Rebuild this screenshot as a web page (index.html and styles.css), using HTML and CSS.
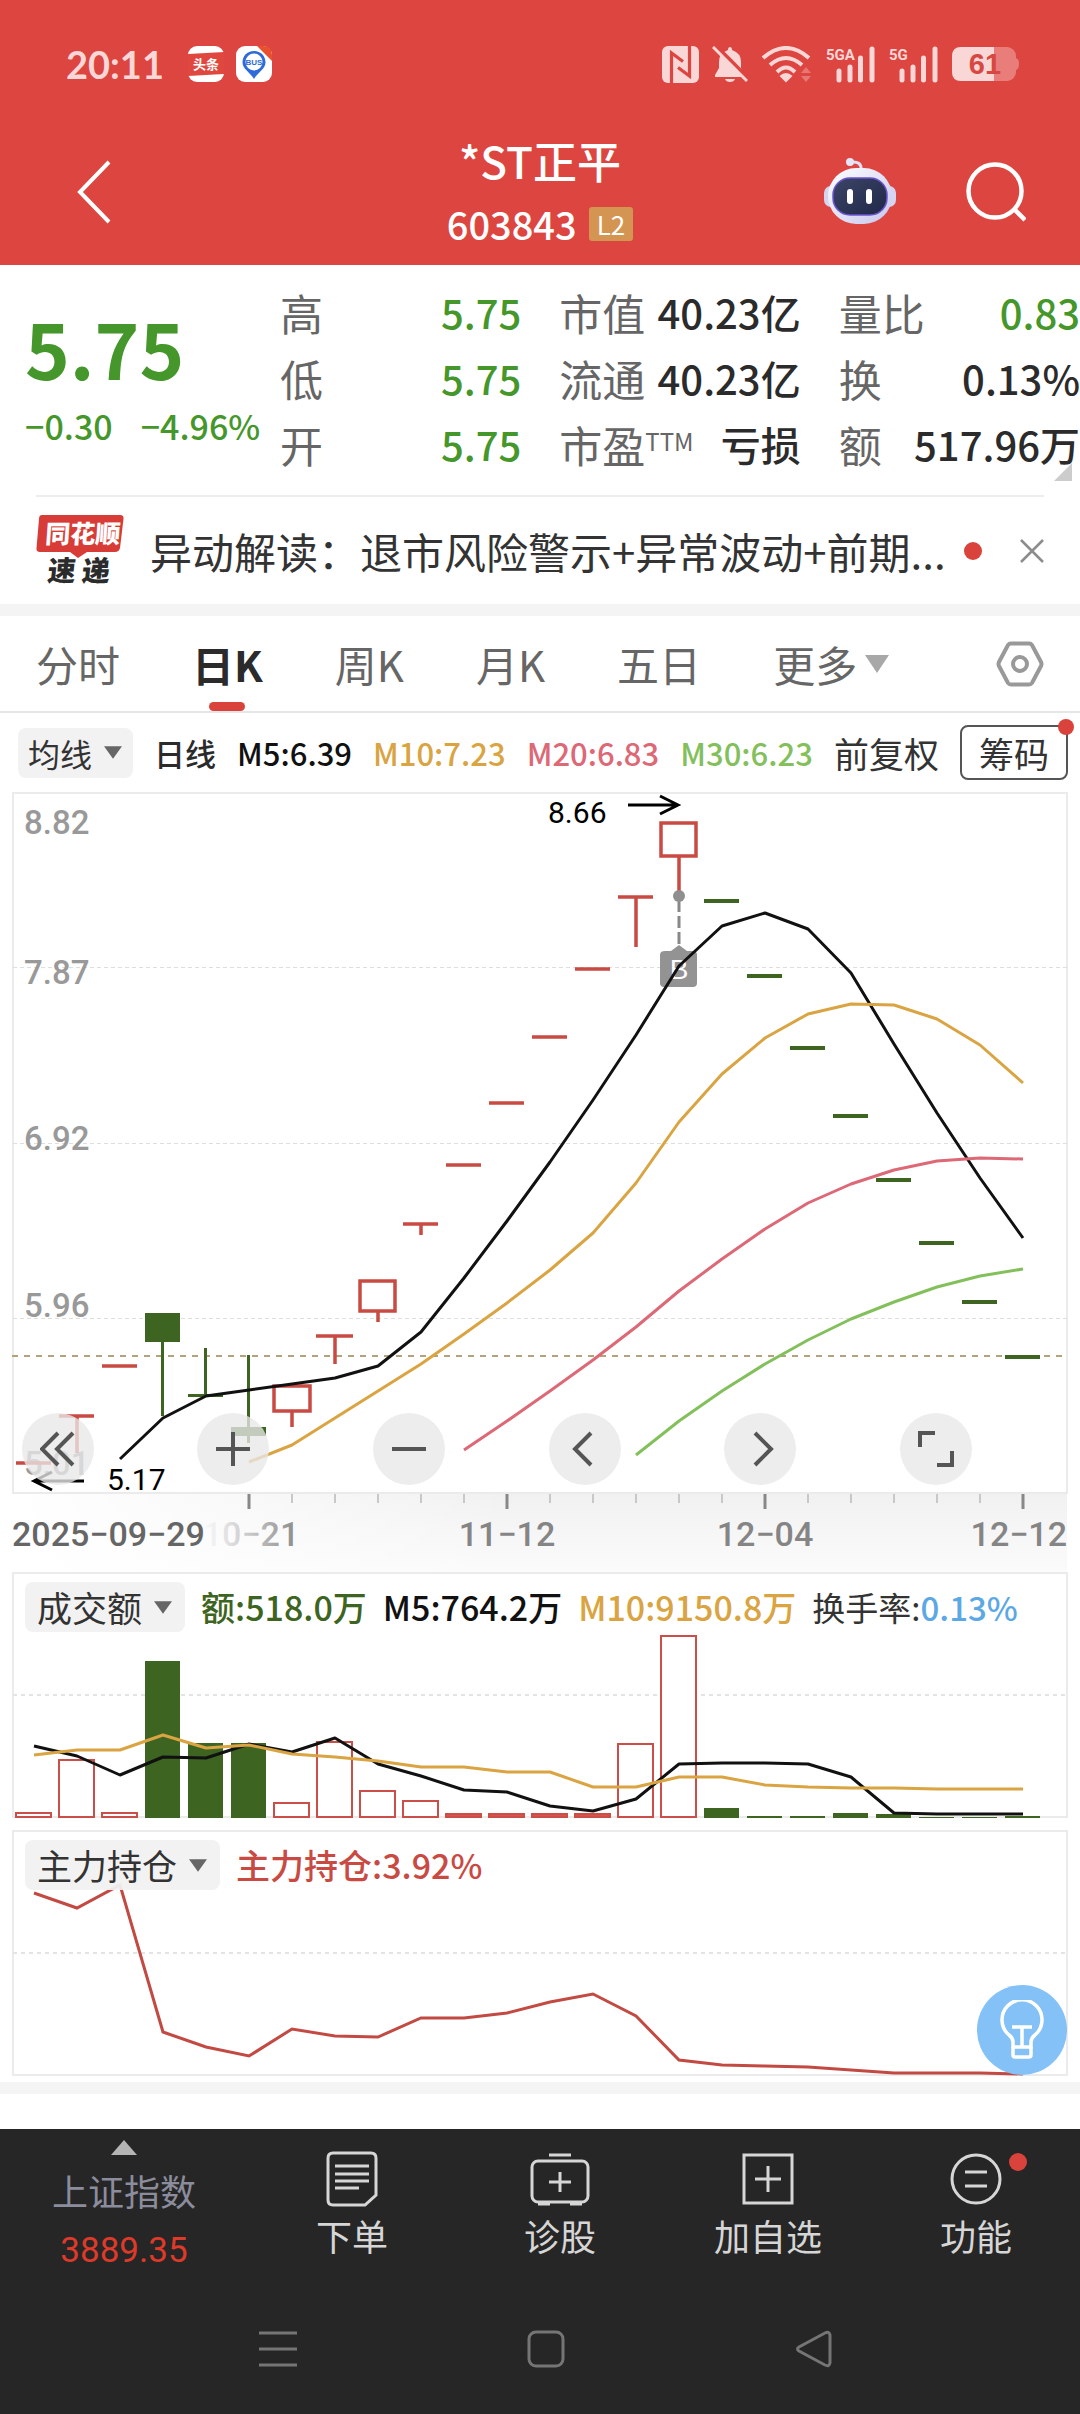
FILE: index.html
```html
<!DOCTYPE html>
<html lang="zh-CN">
<head>
<meta charset="utf-8">
<meta name="viewport" content="width=device-width, initial-scale=1">
<title>*ST正平 603843</title>
<link rel="stylesheet" href="styles.css">
</head>
<body>
<header class="top">
  <div class="status">
    <span class="clock">20:11</span>
    <svg class="app-icon" viewBox="0 0 36 36" width="36" height="36" aria-hidden="true">
      <rect width="36" height="36" rx="9" fill="#fff"/>
      <path d="M0 8 36 6V28L0 30Z" fill="#e0483f"/>
      <text x="18" y="23" text-anchor="middle" class="app-text">头条</text>
    </svg>
    <svg class="app-icon" viewBox="0 0 36 36" width="36" height="36" aria-hidden="true">
      <rect width="36" height="36" rx="9" fill="#fff"/>
      <path d="M21 0H27Q36 0 36 9V15Z" fill="#e8502e"/>
      <path d="M18 5C11 5 6.500 10 6.500 16.500C6.500 23 14 26 18 33C22 26 29.500 23 29.500 16.500C29.500 10 25 5 18 5Z" fill="#2f6bd8"/>
      <circle cx="18" cy="16" r="8.500" fill="#fff"/>
      <text x="18" y="19" text-anchor="middle" class="bus-text">BUS</text>
    </svg>
    <span class="status-right">
      <svg viewBox="0 0 37 37" width="37" height="37" aria-label="NFC"><rect width="37" height="37" rx="6" fill="#f8d7d6"/><path d="M9.500 37V7L21 15.500M27.500 0V30L16 21.500" fill="none" stroke="#dd4540" stroke-width="3.200"/></svg>
      <svg viewBox="0 0 36 37" width="36" height="37" aria-label="静音"><path d="M16 4Q16 1 18 1T20 4Q29 7 29 16V22L32 29V31H3V29L7 22V16Q7 7 16 4Z" fill="#f8d7d6"/><path d="M13 33H23Q22 36 18 36T13 33Z" fill="#f8d7d6"/><path d="M3-1 37 33" stroke="#dd4540" stroke-width="4"/><path d="M1 1 35 35" stroke="#f8d7d6" stroke-width="3"/></svg>
      <svg viewBox="0 0 52 37" width="52" height="37" aria-label="Wi-Fi"><g fill="none" stroke="#f8d7d6" stroke-width="4"><path d="M2 12Q25-8 48 12"/><path d="M9 19Q25 5 41 19"/><path d="M16 26Q25 17 34 26"/></g><path d="M18.500 30Q25 24 31.500 30L25 36.500Z" fill="#f8d7d6"/><path d="M40 27 45 21 50 27ZM40 30 45 36 50 30Z" fill="#e67773"/></svg>
      <svg viewBox="0 0 50 37" width="50" height="37" aria-label="5GA 信号"><text x="0" y="14" class="net-text">5GA</text><path d="M13 25V34M24 21V34M34.500 12V34M46 3V34" stroke="#f8d7d6" stroke-width="5" stroke-linecap="round"/></svg>
      <svg viewBox="0 0 50 37" width="50" height="37" aria-label="5G 信号"><text x="0" y="14" class="net-text">5G</text><path d="M13 25V34M24 21V34M34.500 12V34M46 3V34" stroke="#f8d7d6" stroke-width="5" stroke-linecap="round"/></svg>
      <svg viewBox="0 0 68 34" width="68" height="34" aria-label="电量 61%"><rect width="64" height="34" rx="9" fill="#e97d7a"/><path d="M63 11Q67 11 67 17T63 23Z" fill="#e97d7a"/><path d="M9 0H42V34H9Q0 34 0 25V9Q0 0 9 0Z" fill="#f8d7d6"/><text x="33" y="27" text-anchor="middle" class="bat-text">61</text></svg>
    </span>
  </div>
  <div class="title-bar">
    <button class="icon-btn back" aria-label="返回"><svg viewBox="0 0 36 66" width="36" height="66"><path d="M33 3 4 33 33 63" fill="none" stroke="#fff" stroke-width="4"/></svg></button>
    <div class="title">
      <h1>*ST正平</h1>
      <p><span>603843</span><span class="level">L2</span></p>
    </div>
    <div class="title-actions">
      <button class="icon-btn" aria-label="智能助手"><svg viewBox="0 0 72 68" width="72" height="68">
        <defs><linearGradient id="shell" x1="0" y1="0" x2="1" y2="1"><stop offset="0" stop-color="#fff"/><stop offset="1" stop-color="#c6c6ee"/></linearGradient><linearGradient id="face" x1="0" y1="0" x2="1" y2="1"><stop offset="0" stop-color="#3d4567"/><stop offset="1" stop-color="#20284a"/></linearGradient></defs>
        <path d="M27 4Q38 3 37 12" fill="none" stroke="#dfe0f5" stroke-width="3"/><circle cx="26" cy="4" r="4" fill="#e4e5f8"/>
        <rect x="0" y="28" width="72" height="21" rx="7" fill="#d5d5f0"/>
        <rect x="4" y="10" width="64" height="56" rx="28" fill="url(#shell)"/>
        <rect x="9" y="20" width="54" height="37" rx="17" fill="url(#face)" stroke="#6a55cf" stroke-width="1.500"/>
        <rect x="23" y="31" width="6" height="15" rx="3" fill="#fff"/><rect x="42" y="31" width="6" height="15" rx="3" fill="#fff"/>
      </svg></button>
      <button class="icon-btn" aria-label="搜索"><svg viewBox="0 0 60 60" width="60" height="60"><circle cx="29" cy="29" r="26.500" fill="none" stroke="#fff" stroke-width="4.500"/><path d="M48 47 59 58" stroke="#fff" stroke-width="4.500"/></svg></button>
    </div>
  </div>
</header>

<main>
  <section class="quote">
    <div class="price">
      <strong>5.75</strong>
      <p><span>−0.30</span><span>−4.96%</span></p>
    </div>
    <div class="stats">
      <dl>
        <div><dt>高</dt><dd class="down">5.75</dd></div>
        <div><dt>低</dt><dd class="down">5.75</dd></div>
        <div><dt>开</dt><dd class="down">5.75</dd></div>
      </dl>
      <dl>
        <div><dt>市值</dt><dd>40.23亿</dd></div>
        <div><dt>流通</dt><dd>40.23亿</dd></div>
        <div><dt>市盈<sup>TTM</sup></dt><dd>亏损</dd></div>
      </dl>
      <dl>
        <div><dt>量比</dt><dd class="down">0.83</dd></div>
        <div><dt>换</dt><dd>0.13%</dd></div>
        <div><dt>额</dt><dd>517.96万</dd></div>
      </dl>
    </div>
    <span class="corner"></span>
  </section>

  <section class="news">
    <svg class="news-logo" viewBox="0 0 90 80" width="90" height="80" aria-label="同花顺速递">
      <path d="M6 4H84Q88 4 87.500 8L84 37Q83 41 79 41H51L42 47 34 41H4Q0 41 0.500 37L3 8Q3 4 6 4Z" fill="#d83c37"/>
      <text x="11" y="32" class="logo-a" transform="skewX(-4)">同花顺</text>
      <text x="18" y="70" class="logo-b" transform="skewX(-6)">速 递</text>
    </svg>
    <a href="#news">异动解读：退市风险警示+异常波动+前期...</a>
    <i class="dot"></i>
    <button class="icon-btn" aria-label="关闭"><svg viewBox="0 0 24 24" width="24" height="24"><path d="M1 1 23 23M23 1 1 23" stroke="#8c8c8c" stroke-width="2.500"/></svg></button>
  </section>

  <nav class="tabs">
    <button>分时</button>
    <button class="active">日K</button>
    <button>周K</button>
    <button>月K</button>
    <button>五日</button>
    <button class="more">更多<svg viewBox="0 0 24 18" width="24" height="18"><path d="M0 0H24L12 18Z" fill="#a8a8a8"/></svg></button>
    <button class="gear" aria-label="设置"><svg viewBox="0 0 48 46" width="48" height="46"><path d="M15 2.500H33Q35 2.500 36 4L45 21Q46 23 45 25L36 42Q35 43.500 33 43.500H15Q13 43.500 12 42L3 25Q2 23 3 21L12 4Q13 2.500 15 2.500Z" fill="none" stroke="#999" stroke-width="4"/><circle cx="24" cy="23" r="7" fill="none" stroke="#999" stroke-width="4"/></svg></button>
  </nav>

  <section class="ma-row">
    <button class="picker">均线<svg viewBox="0 0 20 14" width="18" height="13"><path d="M0 0H20L10 14Z" fill="#666"/></svg></button>
    <span class="ma-day">日线</span>
    <span class="c-black">M5:6.39</span>
    <span class="c-gold">M10:7.23</span>
    <span class="c-pink">M20:6.83</span>
    <span class="c-lime">M30:6.23</span>
    <span class="adjust">前复权</span>
    <button class="chips">筹码<i class="dot"></i></button>
  </section>

  <section class="kline">
    <svg class="chart" viewBox="0 790 1080 782" role="img" aria-label="日K线图">
      <defs>
        <linearGradient id="axisV" x1="0" y1="0" x2="0" y2="1"><stop offset="0" stop-color="#f1f1f1"/><stop offset="1" stop-color="#fbfbfb"/></linearGradient>
        <linearGradient id="axisH"><stop offset="0" stop-color="#fff"/><stop offset="1" stop-color="#fff" stop-opacity="0"/></linearGradient>
        <linearGradient id="dateFade"><stop offset="0" stop-color="#999" stop-opacity="0"/><stop offset="1" stop-color="#888"/></linearGradient>
      </defs>
      <rect x="13" y="1494" width="1054" height="78" fill="url(#axisV)"/>
      <rect x="13" y="1494" width="500" height="78" fill="url(#axisH)"/>
      <rect x="13" y="793" width="1054" height="700" fill="#fff" stroke="#ebebeb" stroke-width="2"/>
      <path d="M13 967.500H1067M13 1143.500H1067M13 1318.500H1067" stroke="#dedede" stroke-dasharray="4 3"/>
      <g class="axis-y">
        <text x="24" y="834">8.82</text><text x="24" y="984">7.87</text><text x="24" y="1150">6.92</text><text x="24" y="1317">5.96</text><text x="24" y="1475">5.01</text>
      </g>
      <path d="M12 1356H1067" stroke="#b3a37b" stroke-width="2" stroke-dasharray="6 6"/>
      <g stroke="#c94a43" stroke-width="3.500" fill="none">
        <path d="M16 1463H51M59 1416H94M77 1416V1453M102 1366H137"/>
        <path d="M274 1386H310V1411H274ZM292 1411V1427M316 1336H353M335 1336V1364M360 1281H395V1311H360ZM378 1311V1322"/>
        <path d="M403 1224H438M421 1224V1235M446 1165H481M489 1103H524M532 1037H567M575 969H610M618 897H653M636 897V947M661 823H696V856H661ZM679 856V896"/>
      </g>
      <g fill="#3e6422">
        <path d="M145 1313H180V1342H145ZM161 1342H164V1416H161ZM188 1394H223V1397H188ZM204 1348H207V1395H204ZM231 1427H266V1436H231ZM247 1355H250V1443H247Z"/>
        <path d="M704 899H739V903H704ZM747 974H782V978H747ZM790 1046H825V1050H790ZM833 1114H868V1118H833ZM876 1178H911V1182H876ZM919 1241H954V1245H919ZM962 1300H997V1304H962ZM1005 1355H1040V1359H1005Z"/>
      </g>
      <path d="M679 900V948" stroke="#888" stroke-width="3" stroke-dasharray="12 4"/>
      <circle cx="679" cy="896" r="6" fill="#8f8f8f"/>
      <path d="M665 951H671L679 945 687 951H693Q697 951 697 955V983Q697 987 693 987H664Q660 987 660 983V955Q660 951 665 951Z" fill="#939393"/>
      <text x="679" y="979" text-anchor="middle" class="badge-b">B</text>
      <g class="line">
        <polyline stroke="#111" points="120,1459 163,1418 206,1396 249,1390 292,1384 335,1378 378,1366 421,1332 464,1278 507,1221 550,1162 593,1100 636,1035 679,966 722,926 765,913 808,929 851,973 894,1044 937,1113 980,1178 1023,1238"/>
        <polyline stroke="#d9a441" points="249,1462 292,1445 335,1418 378,1391 421,1364 464,1334 507,1303 550,1270 593,1233 636,1183 679,1122 722,1074 765,1038 808,1014 851,1004 894,1005 937,1019 980,1045 1023,1083"/>
        <polyline stroke="#dd6876" points="464,1450 507,1421 550,1391 593,1360 636,1327 679,1291 722,1259 765,1229 808,1203 851,1184 894,1170 937,1161 980,1158 1023,1159"/>
        <polyline stroke="#83c05c" points="636,1455 679,1421 722,1391 765,1364 808,1340 851,1319 894,1302 937,1287 980,1276 1023,1269"/>
      </g>
      <g fill="none" stroke="#000" stroke-width="3"><path d="M628 805H678M660 796 678 805 660 814M84 1481H35M52 1472 34 1481 52 1490"/></g>
      <g class="mark"><text x="548" y="823">8.66</text><text x="107" y="1490">5.17</text></g>
      <path d="M292 1494V1503M335 1494V1503M378 1494V1503M421 1494V1503M464 1494V1503M550 1494V1503M593 1494V1503M636 1494V1503M679 1494V1503M722 1494V1503M808 1494V1503M851 1494V1503M894 1494V1503M937 1494V1503M980 1494V1503" stroke="#c8c8c8" stroke-width="2"/>
      <path d="M249 1494V1509M507 1494V1509M765 1494V1509M1023 1494V1509" stroke="#888" stroke-width="3"/>
      <g class="axis-x">
        <text x="12" y="1546" class="first">2025−09−29</text>
        <text x="251" y="1546" text-anchor="middle" fill="url(#dateFade)">10−21</text>
        <text x="507" y="1546" text-anchor="middle">11−12</text>
        <text x="765" y="1546" text-anchor="middle">12−04</text>
        <text x="1067" y="1546" text-anchor="end">12−12</text>
      </g>
    </svg>
    <div class="controls">
      <button aria-label="最早"><svg viewBox="0 0 36 36" width="36" height="36"><path d="M18 2 2 18 18 34M33 2 17 18 33 34"/></svg></button>
      <button aria-label="放大"><svg viewBox="0 0 36 36" width="36" height="36"><path d="M1 18H35M18 1V35"/></svg></button>
      <button aria-label="缩小"><svg viewBox="0 0 36 36" width="36" height="36"><path d="M1 18H35"/></svg></button>
      <button aria-label="左移"><svg viewBox="0 0 36 36" width="36" height="36"><path d="M24 2 8 18 24 34"/></svg></button>
      <button aria-label="右移"><svg viewBox="0 0 36 36" width="36" height="36"><path d="M13 2 29 18 13 34"/></svg></button>
      <button aria-label="全屏"><svg viewBox="0 0 36 36" width="36" height="36"><path d="M2 16V2H17M19 34H34V20"/></svg></button>
    </div>
  </section>

  <section class="panel">
    <svg class="chart" viewBox="0 1572 1080 247" role="img" aria-label="成交额">
      <rect x="13" y="1573" width="1054" height="244" fill="#fff" stroke="#ebebeb" stroke-width="2"/>
      <path d="M13 1695H1067" stroke="#e4e4e4" stroke-width="2" stroke-dasharray="4 4"/>
      <g fill="#fff" stroke="#cb4f48" stroke-width="2">
        <path d="M16 1813H51V1817H16ZM59 1760H94V1817H59ZM102 1813H137V1817H102ZM274 1803H309V1817H274ZM317 1742H352V1817H317ZM360 1791H395V1817H360ZM403 1801H438V1817H403ZM618 1744H653V1817H618ZM661 1636H696V1817H661Z"/>
        <path fill="#d9534b" d="M446 1814H481V1817H446ZM489 1814H524V1817H489ZM532 1814H567V1817H532ZM575 1814H610V1817H575Z"/>
      </g>
      <path fill="#3e6422" d="M145 1661H180V1818H145ZM188 1743H223V1818H188ZM231 1743H266V1818H231ZM704 1808H739V1818H704ZM747 1816H782V1818H747ZM790 1816H825V1818H790ZM833 1813H868V1818H833ZM876 1814H911V1818H876ZM919 1817H954V1818H919ZM962 1817H997V1818H962ZM1005 1816H1040V1818H1005Z"/>
      <g class="line">
        <polyline stroke="#111" points="34,1746 77,1756 120,1775 163,1757 206,1758 249,1744 292,1752 335,1738 378,1764 421,1776 464,1790 507,1792 550,1806 593,1811 636,1799 679,1764 722,1763 765,1763 808,1764 851,1777 894,1813 937,1814 980,1814 1023,1814"/>
        <polyline stroke="#d9a441" points="34,1755 77,1750 120,1750 163,1735 206,1748 249,1745 292,1754 335,1757 378,1761 421,1767 464,1767 507,1772 550,1772 593,1787 636,1787 679,1777 722,1777 765,1785 808,1787 851,1788 894,1788 937,1789 980,1789 1023,1789"/>
      </g>
    </svg>
    <div class="legend">
      <button class="picker">成交额<svg viewBox="0 0 20 14" width="18" height="13"><path d="M0 0H20L10 14Z" fill="#666"/></svg></button>
      <span class="c-green">额:518.0万</span>
      <span class="c-black">M5:764.2万</span>
      <span class="c-gold">M10:9150.8万</span>
      <span class="turn">换手率:<b>0.13%</b></span>
    </div>
  </section>

  <section class="panel holding">
    <svg class="chart" viewBox="0 1830 1080 247" role="img" aria-label="主力持仓">
      <rect x="13" y="1831" width="1054" height="244" fill="#fff" stroke="#ebebeb" stroke-width="2"/>
      <path d="M13 1953H1067" stroke="#e4e4e4" stroke-width="2" stroke-dasharray="4 4"/>
      <polyline class="hold-line" points="34,1893 77,1908 120,1885 163,2032 206,2047 249,2056 292,2029 335,2036 378,2037 421,2018 464,2018 507,2013 550,2002 593,1994 636,2016 679,2060 722,2065 765,2066 808,2067 851,2070 894,2073 937,2073 980,2073 1023,2074"/>
    </svg>
    <div class="legend">
      <button class="picker">主力持仓<svg viewBox="0 0 20 14" width="18" height="13"><path d="M0 0H20L10 14Z" fill="#666"/></svg></button>
      <span class="c-red">主力持仓:3.92%</span>
    </div>
    <button class="tip" aria-label="提示"><svg viewBox="0 0 44 60" width="44" height="60"><g fill="none" stroke="#fff" stroke-width="3.500"><path d="M13 47V42Q13 38 9 35A20 20 0 1 1 35 35Q31 38 31 42V47Z"/><path d="M13 47V55Q13 57 15 57H29Q31 57 31 55V47M12 27H32M22 27V47"/></g></svg></button>
  </section>
</main>

<footer class="bottom">
  <nav class="actions">
    <button class="index">
      <svg viewBox="0 0 26 15" width="26" height="15"><path d="M0 15 13 0 26 15Z" fill="#b5b5b5"/></svg>
      <span>上证指数</span>
      <span class="index-value">3889.35</span>
    </button>
    <button><svg viewBox="0 0 60 56" width="60" height="56"><g class="ic"><path d="M11 2H49Q54 2 54 7V44L43 54H11Q6 54 6 49V7Q6 2 11 2Z"/><path d="M13 15H47M13 23H47M13 30H47M13 37H37"/></g></svg><span>下单</span></button>
    <button><svg viewBox="0 0 60 56" width="60" height="56"><g class="ic"><rect x="2" y="10" width="56" height="41" rx="6"/><path d="M19 4H41M8 53H20M40 53H52M19 31H41M30 21V41"/></g></svg><span>诊股</span></button>
    <button><svg viewBox="0 0 60 56" width="60" height="56"><g class="ic"><rect x="6" y="4" width="48" height="48"/><path d="M17 28H43M30 15V41"/></g></svg><span>加自选</span></button>
    <button class="has-dot"><svg viewBox="0 0 60 56" width="60" height="56"><g class="ic"><circle cx="30" cy="28" r="24"/><path d="M19 21H41M19 35H41"/></g></svg><span>功能</span><i class="dot"></i></button>
  </nav>
  <nav class="system">
    <button aria-label="任务"><svg viewBox="0 0 38 38" width="38" height="38"><path d="M0 3H38M0 19H38M0 35H38"/></svg></button>
    <button aria-label="主页"><svg viewBox="0 0 38 38" width="38" height="38"><rect x="2" y="2" width="34" height="34" rx="7"/></svg></button>
    <button aria-label="返回"><svg viewBox="0 0 38 38" width="38" height="38"><path d="M30 3Q34 1 35 5V33Q34 37 30 35L4 21Q1 19 4 17Z"/></svg></button>
  </nav>
</footer>
</body>
</html>
```
FILE: styles.css
```css
* { box-sizing: border-box; }

body {
  margin: 0;
  min-height: 100vh;
  display: flex;
  flex-direction: column;
  background: #fff;
  color: #2b2b2b;
  font-family: "Noto Sans CJK SC", "Noto Sans", sans-serif;
}

button {
  padding: 0;
  border: 0;
  background: none;
  color: inherit;
  font: inherit;
  line-height: inherit;
}

svg { display: block; flex: none; }
h1, p, dl, dd { margin: 0; }
i { font-style: normal; }

.dot {
  flex: none;
  width: 18px;
  height: 18px;
  border-radius: 50%;
  background: #d9433b;
}

/* header */
.top { background: #dd4540; color: #fff; }

.status {
  display: flex;
  align-items: center;
  gap: 12px;
  padding: 44px 60px 0 66px;
  height: 84px;
}
.clock {
  margin-right: 12px;
  color: #f8d7d6;
  font: 700 38px/38px Lato, sans-serif;
}
.status-right {
  display: flex;
  align-items: center;
  gap: 13px;
  margin-left: auto;
}
.app-text { font: 700 13px "Noto Sans CJK SC", sans-serif; fill: #fff; }
.bus-text { font: 700 8px "Liberation Sans", sans-serif; fill: #2f6bd8; }
.net-text { font: 700 15px Roboto, sans-serif; fill: #f8d7d6; }
.bat-text { font: 700 29px "Liberation Sans", sans-serif; fill: #d84842; }

.title-bar {
  display: grid;
  grid-template-columns: 1fr auto 1fr;
  align-items: center;
  height: 181px;
  padding: 34px 54px 0;
}
.back { justify-self: start; margin-left: 22px; }
.title { text-align: center; }
.title h1 { font-size: 44px; line-height: 64px; font-weight: 500; }
.title p {
  display: flex;
  align-items: center;
  justify-content: center;
  gap: 12px;
  font-size: 38px;
  line-height: 64px;
  font-weight: 500;
}
.level {
  padding: 0 8px;
  border-radius: 3px;
  background: #d49452;
  font-size: 26px;
  line-height: 34px;
  font-weight: 400;
}
.title-actions {
  display: flex;
  justify-content: flex-end;
  align-items: center;
  gap: 70px;
}

/* quote */
.quote {
  position: relative;
  display: flex;
  padding: 14px 0 18px;
  color: #2b2b2b;
}
.price {
  flex: 0 0 280px;
  padding: 12px 0 0 25px;
  color: #45972b;
  font-weight: 500;
}
.price strong {
  display: block;
  font-size: 76px;
  line-height: 112px;
  font-weight: 700;
}
.price p {
  display: flex;
  gap: 28px;
  font-size: 34px;
  line-height: 46px;
}
.stats {
  flex: 1;
  display: grid;
  grid-template-columns: repeat(3, 1fr);
  column-gap: 38px;
}
.stats dl div {
  display: flex;
  justify-content: space-between;
  line-height: 66px;
  white-space: nowrap;
}
.stats dt { font-size: 43px; color: #666; }
.stats dd { font-size: 40px; font-weight: 500; }
.stats dd.down { color: #45972b; }
.stats sup {
  font-size: 24px;
  line-height: 24px;
  vertical-align: 12px;
}
.corner {
  position: absolute;
  right: 8px;
  bottom: 14px;
  border-left: 18px solid transparent;
  border-bottom: 18px solid #ccc;
}

/* news */
.news {
  display: flex;
  align-items: center;
  margin: 0 36px;
  height: 109px;
  border-top: 2px solid #ededed;
}
.news a {
  flex: 1;
  margin-left: 24px;
  color: #333;
  font-size: 42px;
  line-height: 60px;
  white-space: nowrap;
  text-decoration: none;
}
.news button { margin-left: 38px; }
.logo-a { font: 900 25px "Noto Sans CJK SC", sans-serif; fill: #fff; }
.logo-b { font: 900 28px "Noto Sans CJK SC", sans-serif; fill: #2b2b2b; }

/* period tabs */
.tabs {
  display: flex;
  align-items: stretch;
  gap: 72px;
  padding: 0 36px;
  height: 109px;
  border-top: 12px solid #f4f4f4;
  border-bottom: 2px solid #e6e6e6;
  color: #666;
  font-size: 42px;
}
.tabs .active {
  position: relative;
  color: #2b2b2b;
  font-weight: 700;
}
.active::after {
  content: "";
  position: absolute;
  left: 50%;
  bottom: 0;
  width: 36px;
  height: 9px;
  margin-left: -18px;
  border-radius: 5px;
  background: #d9433b;
}
.more { display: flex; align-items: center; gap: 8px; }
.gear { margin-left: auto; }

/* moving-average row */
.ma-row {
  display: flex;
  align-items: center;
  justify-content: space-between;
  height: 77px;
  padding: 2px 12px 0 18px;
  font-size: 31px;
  font-weight: 500;
}
.picker {
  display: flex;
  align-items: center;
  gap: 12px;
  height: 50px;
  padding: 0 13px 0 12px;
  border-radius: 8px;
  background: #f1f1f1f0;
  color: #333;
  font-weight: 400;
}
.ma-row .picker { font-size: 32px; padding: 0 11px 0 10px; }
.adjust, .chips { font-size: 35px; font-weight: 400; color: #333; }
.chips {
  position: relative;
  width: 108px;
  height: 55px;
  border: 2px solid #555;
  border-radius: 8px;
}
.chips .dot {
  position: absolute;
  top: -8px;
  right: -8px;
  width: 16px;
  height: 16px;
}
.c-black { color: #111; }
.c-gold { color: #d9a441; }
.c-pink { color: #dd6876; }
.c-lime { color: #83c05c; }
.c-green { color: #3e6422; }
.c-red { color: #c94a43; }

/* charts */
.chart { width: 100%; height: auto; }
.line polyline { fill: none; stroke-width: 3; stroke-linejoin: round; }
.hold-line { fill: none; stroke: #c24a43; stroke-width: 3; }
.axis-y { font: 500 33px Roboto, sans-serif; fill: #999; }
.axis-x { font: 500 34px Roboto, sans-serif; fill: #858585; }
.axis-x .first { fill: #666; }
.mark { font: 400 30px Roboto, sans-serif; fill: #000; }
.badge-b { font: 400 28px "Liberation Sans", sans-serif; fill: #fff; }

.kline { position: relative; }
.controls {
  position: absolute;
  left: 2%;
  right: 10%;
  bottom: 87px;
  display: flex;
  justify-content: space-between;
}
.controls button {
  display: grid;
  place-items: center;
  width: 72px;
  height: 72px;
  border-radius: 50%;
  background: #e8e8e8c8;
}
.controls path { fill: none; stroke: #555; stroke-width: 4; }

.panel { position: relative; }
.holding { margin-top: 11px; }
.legend {
  position: absolute;
  top: 10px;
  left: 25px;
  display: flex;
  align-items: center;
  font-size: 35px;
  line-height: 50px;
  white-space: nowrap;
  font-weight: 500;
}
.legend > span { margin-left: 16px; font-size: 34px; }
.legend .turn { font-size: 33px; font-weight: 400; color: #333; }
.turn b { color: #5ba8e5; font-weight: 500; }

.tip {
  position: absolute;
  right: 13px;
  bottom: 2px;
  display: grid;
  place-items: center;
  width: 90px;
  height: 90px;
  border-radius: 50%;
  background: #84c1f7;
}

/* bottom bar */
.bottom {
  margin-top: 5px;
  border-top: 12px solid #f4f4f4;
}
.actions {
  display: grid;
  grid-template-columns: 248fr 208fr 208fr 208fr 208fr;
  margin-top: 35px;
  height: 180px;
  background: #262626;
  color: #d6d6d6;
  font-size: 36px;
  line-height: 52px;
}
.actions button {
  position: relative;
  display: flex;
  flex-direction: column;
  align-items: center;
  padding-top: 22px;
}
.actions span { margin-top: 2px; }
.actions .index { padding-top: 11px; color: #8b8c9c; }
.actions .index span { margin-top: 9px; }
.actions .index-value { color: #dd3a2a; font: 400 35px/52px Roboto, sans-serif; }
.has-dot .dot { position: absolute; top: 24px; left: 66%; }
.ic { fill: none; stroke: #d6d6d6; stroke-width: 3; }
.system {
  display: flex;
  justify-content: center;
  gap: 230px;
  padding: 21px 0 47px 12px;
  background: #262626;
}
.system svg { fill: none; stroke: #757575; stroke-width: 3; }
```
